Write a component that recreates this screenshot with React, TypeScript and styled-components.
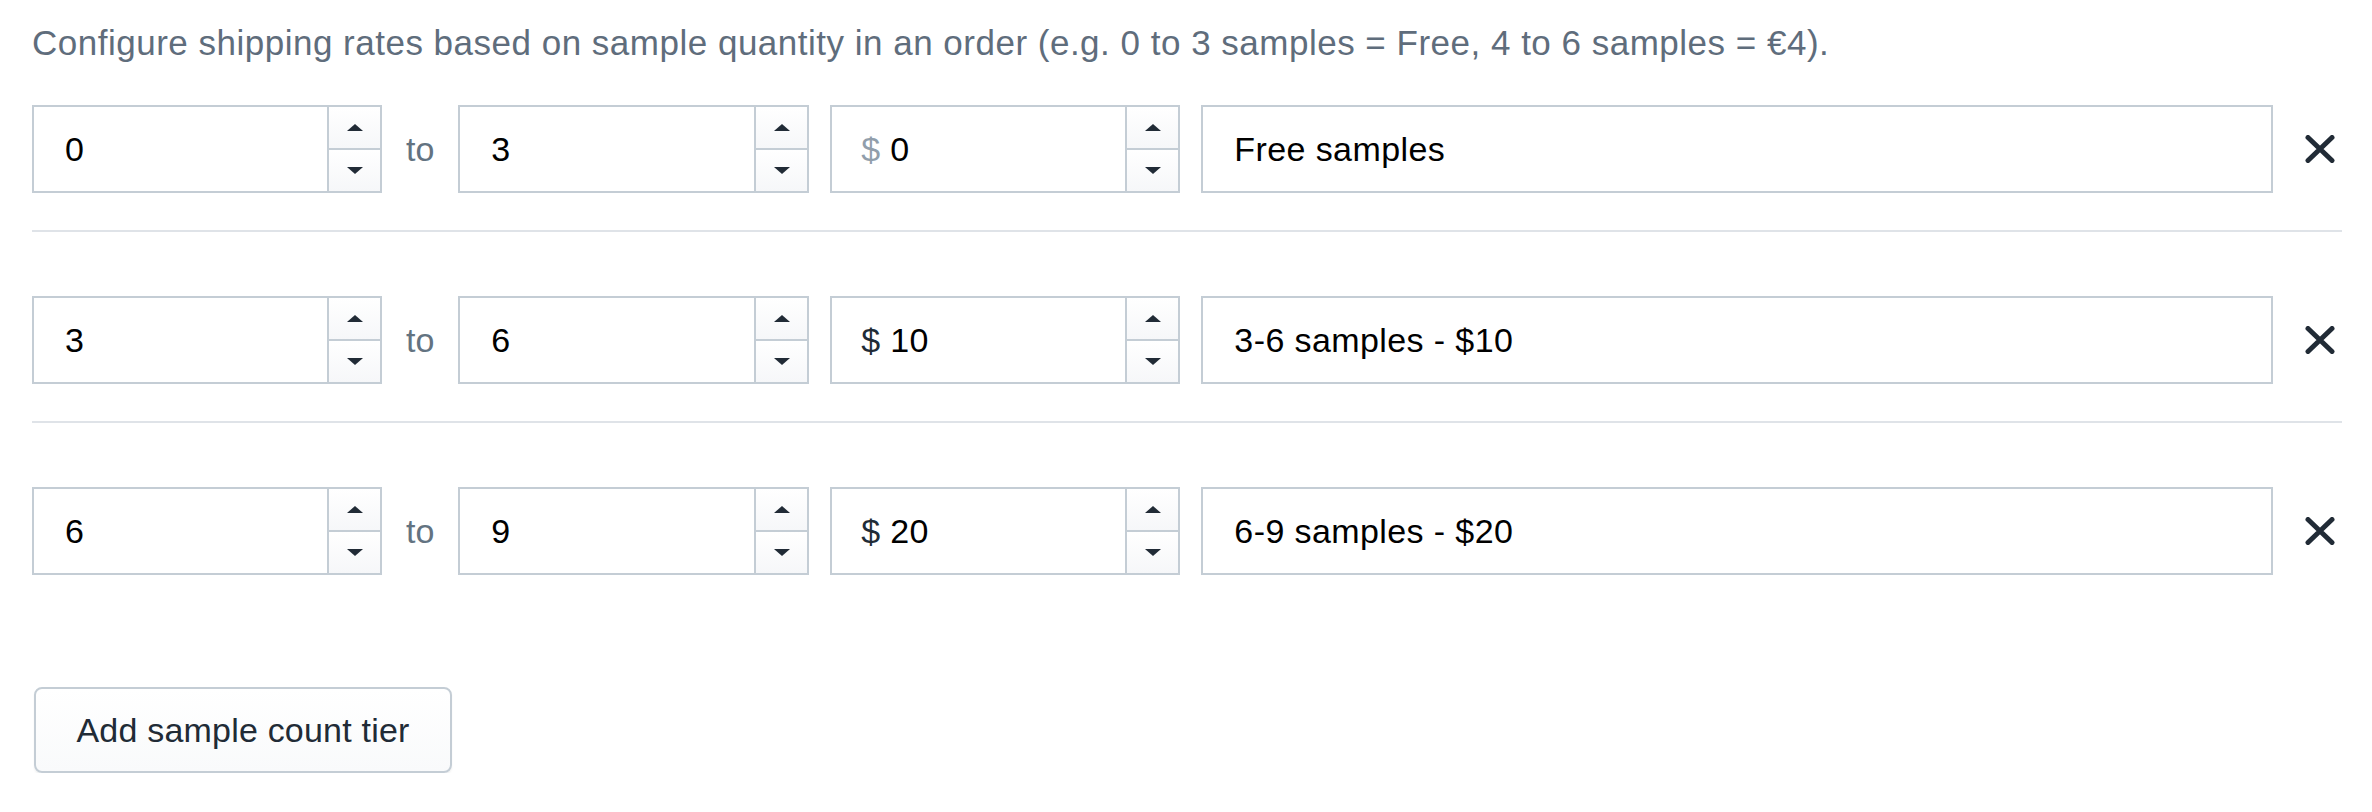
import React from "react";
import styled, { createGlobalStyle } from "styled-components";

const GlobalStyle = createGlobalStyle`
  html, body {
    margin: 0;
    padding: 0;
    background: #ffffff;
  }
  body {
    font-family: "Liberation Sans", Arial, "Helvetica Neue", sans-serif;
    -webkit-font-smoothing: antialiased;
  }
  * { box-sizing: border-box; }
`;

const Page = styled.div`
  padding: 19px 30px 0 32px;
  color: #212b36;
  font-size: 34px;
`;

const Intro = styled.p`
  margin: 0;
  line-height: 48px;
  color: #5f6d7c;
  font-size: 35px;
  letter-spacing: 0.5px;
`;

const TierList = styled.div`
  margin-top: 38px;
  display: flex;
  flex-direction: column;
`;

const Tier = styled.div<{ $last?: boolean }>`
  display: flex;
  align-items: center;
  padding-bottom: ${(p) => (p.$last ? "0" : "37px")};
  margin-bottom: ${(p) => (p.$last ? "0" : "64px")};
  border-bottom: ${(p) => (p.$last ? "none" : "2px solid #dfe3e8")};
`;

const Field = styled.div<{ $width?: number; $grow?: boolean }>`
  display: flex;
  align-items: stretch;
  height: 88px;
  width: ${(p) => (p.$width ? `${p.$width}px` : "auto")};
  flex: ${(p) => (p.$grow ? "1 1 auto" : "0 0 auto")};
  border: 2px solid #c4cdd5;
  background: #ffffff;
`;

const Prefix = styled.span<{ $muted?: boolean }>`
  display: flex;
  align-items: center;
  padding-left: 29px;
  padding-right: 10px;
  color: ${(p) => (p.$muted ? "#919eab" : "#212b36")};
  font-size: 34px;
`;

const TextInput = styled.input<{ $pad?: number }>`
  flex: 1 1 auto;
  min-width: 0;
  border: none;
  outline: none;
  background: transparent;
  padding: 0 0 0 ${(p) => (p.$pad ?? 31)}px;
  margin: 0;
  font-family: "Liberation Sans", Arial, sans-serif;
  font-size: 34px;
  letter-spacing: 0.4px;
  color: #000000;
`;

const Spinner = styled.div`
  flex: 0 0 53px;
  display: flex;
  flex-direction: column;
  border-left: 2px solid #c4cdd5;
`;

const SpinButton = styled.button<{ $bottom?: boolean }>`
  flex: 1 1 0;
  display: flex;
  align-items: center;
  justify-content: center;
  border: none;
  border-top: ${(p) => (p.$bottom ? "2px solid #c4cdd5" : "none")};
  padding: 0;
  margin: 0;
  background: linear-gradient(180deg, #ffffff, #f6f7f9);
  cursor: pointer;
`;

const Arrow = styled.span<{ $down?: boolean }>`
  width: 0;
  height: 0;
  border-left: 8px solid transparent;
  border-right: 8px solid transparent;
  ${(p) =>
    p.$down
      ? "border-top: 7px solid #212b36;"
      : "border-bottom: 7px solid #212b36;"}
`;

const ToLabel = styled.span`
  padding: 0 24px;
  color: #637381;
  font-size: 34px;
`;

const Gap = styled.span`
  flex: 0 0 21px;
`;

const RemoveButton = styled.button`
  flex: 0 0 auto;
  display: flex;
  align-items: center;
  justify-content: center;
  width: 30px;
  height: 28px;
  margin: 0 7px 0 32px;
  padding: 0;
  border: none;
  background: transparent;
  cursor: pointer;
  color: #212b36;
`;

const AddButton = styled.button`
  margin-top: 112px;
  margin-left: 2px;
  height: 86px;
  width: 418px;
  border: 2px solid #c4cdd5;
  border-radius: 8px;
  background: linear-gradient(180deg, #ffffff, #f9fafb);
  box-shadow: 0 2px 2px rgba(22, 29, 37, 0.06);
  color: #212b36;
  font-family: "Liberation Sans", Arial, sans-serif;
  font-size: 34px;
  letter-spacing: 0.2px;
  padding: 0;
  cursor: pointer;
`;

const Stepper: React.FC = () => (
  <Spinner>
    <SpinButton aria-label="Increase">
      <Arrow />
    </SpinButton>
    <SpinButton $bottom aria-label="Decrease">
      <Arrow $down />
    </SpinButton>
  </Spinner>
);

const CloseIcon: React.FC = () => (
  <svg width="30" height="28" viewBox="0 0 30 28" fill="none">
    <path
      d="M3 2.5 L27 25.5 M27 2.5 L3 25.5"
      stroke="currentColor"
      strokeWidth="5"
      strokeLinecap="round"
    />
  </svg>
);

type TierData = {
  from: string;
  to: string;
  price: string;
  label: string;
  mutedCurrency?: boolean;
};

const tiers: TierData[] = [
  { from: "0", to: "3", price: "0", label: "Free samples", mutedCurrency: true },
  { from: "3", to: "6", price: "10", label: "3-6 samples - $10" },
  { from: "6", to: "9", price: "20", label: "6-9 samples - $20" },
];

export default function App() {
  return (
    <>
      <GlobalStyle />
      <Page>
        <Intro>
          Configure shipping rates based on sample quantity in an order (e.g. 0 to 3 samples = Free, 4 to 6 samples = €4).
        </Intro>
        <TierList>
          {tiers.map((t, i) => (
            <Tier key={i} $last={i === tiers.length - 1}>
              <Field $width={350}>
                <TextInput defaultValue={t.from} />
                <Stepper />
              </Field>
              <ToLabel>to</ToLabel>
              <Field $width={351}>
                <TextInput defaultValue={t.to} />
                <Stepper />
              </Field>
              <Gap />
              <Field $width={350}>
                <Prefix $muted={t.mutedCurrency}>$</Prefix>
                <TextInput $pad={0} defaultValue={t.price} />
                <Stepper />
              </Field>
              <Gap />
              <Field $grow>
                <TextInput $pad={31} defaultValue={t.label} />
              </Field>
              <RemoveButton aria-label="Remove tier">
                <CloseIcon />
              </RemoveButton>
            </Tier>
          ))}
        </TierList>
        <AddButton>Add sample count tier</AddButton>
      </Page>
    </>
  );
}
